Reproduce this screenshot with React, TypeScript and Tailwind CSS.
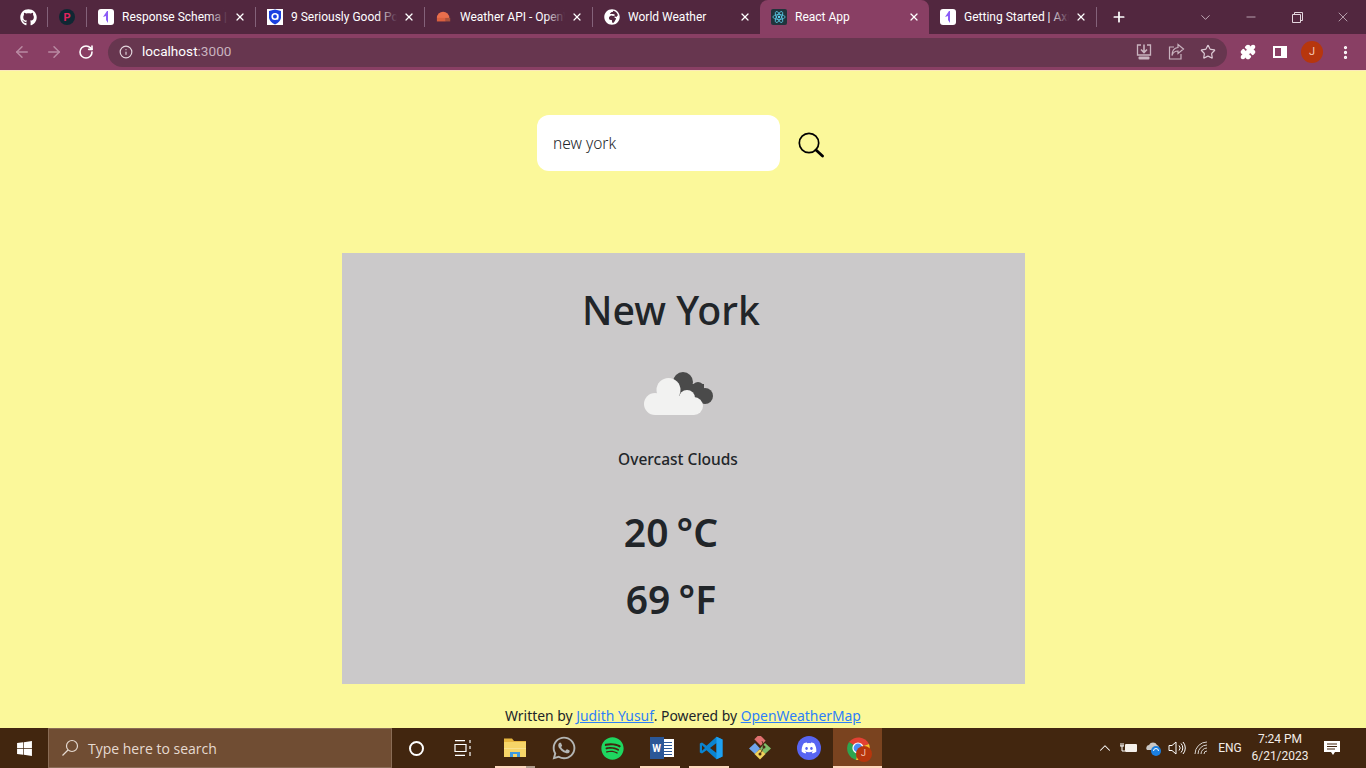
import React from "react";
import { ArrowLeft, ArrowRight, RotateCw, Info, Star, Plus, X, Minus, ChevronDown, ChevronUp, Puzzle, EllipsisVertical } from "lucide-react";
import { FaGithub, FaWhatsapp, FaSpotify, FaDiscord, FaWindows } from "react-icons/fa";
import { FaGlobeAfrica } from "react-icons/fa";

const P1 = () => (
  <div className="w-4 h-4 rounded-[3px] bg-white flex items-center justify-center">
    <svg width="8" height="12" viewBox="0 0 8 12"><path d="M5 0 L6 0 L6 12 L4 9 L4 5 L1 6 Z" fill="#8b5cf6" /></svg>
  </div>
);
const Auth0 = () => (
  <div className="w-4 h-4 bg-white flex items-center justify-center">
    <svg width="14" height="16" viewBox="0 0 14 16"><path d="M1 2 L7 0.5 L13 2 L13 9 Q12 13 7 15.5 Q2 13 1 9 Z" fill="#1a40e0" /><circle cx="7" cy="7.5" r="2.8" fill="none" stroke="#fff" strokeWidth="1.6" /><path d="M9.6 5 V10.5" stroke="#fff" strokeWidth="1.4" /></svg>
  </div>
);
const Helmet = () => (
  <svg width="18" height="16" viewBox="0 0 18 16"><path d="M1 9 a7 7 0 0 1 14 0 Z" fill="#e96e4c" /><rect x="1" y="9" width="10" height="4" fill="#d9603f" /><rect x="11" y="9" width="5" height="4" fill="#a9533c" /></svg>
);
const ReactFav = () => (
  <div className="w-4 h-4 rounded-[2px] bg-[#20343c] flex items-center justify-center">
    <svg width="14" height="14" viewBox="-12 -12 24 24" fill="none" stroke="#61dafb" strokeWidth="1.2"><circle r="2" fill="#61dafb" stroke="none" /><ellipse rx="10.5" ry="4.2" /><ellipse rx="10.5" ry="4.2" transform="rotate(60)" /><ellipse rx="10.5" ry="4.2" transform="rotate(120)" /></svg>
  </div>
);
const Sep = () => <div className="w-px h-[20px] bg-[#84627a] shrink-0" />;

function Tab({ icon, title, active, sep = true, w = "w-[168px]" }: { icon: React.ReactNode; title: string; active?: boolean; sep?: boolean; w?: string }) {
  const fade = active ? "from-[#893f64]/0 to-[#893f64]" : "from-[#52273f]/0 to-[#52273f]";
  return (
    <>
      <div className={`${w} shrink-0 h-[34px] flex items-center pl-[11px] pr-[8px] relative ${active ? "bg-[#893f64] rounded-t-[8px]" : ""}`}>
        <div className="w-4 h-4 shrink-0 flex items-center justify-center">{icon}</div>
        <div className="ml-2 flex-1 overflow-hidden relative whitespace-nowrap text-[12px] text-white" style={{ fontFamily: "Roboto, sans-serif" }}>
          {title}
          <div className={`absolute right-0 top-0 bottom-0 w-[20px] bg-gradient-to-r ${fade}`} />
        </div>
        <X size={12} strokeWidth={2.4} color="#fff" className="ml-[6px] mr-[1px] shrink-0" />
      </div>
      {sep ? <Sep /> : null}
    </>
  );
}

const Word = () => (
  <div className="relative w-[24px] h-[22px]">
    <div className="absolute right-0 top-[2px] w-[14px] h-[18px] bg-white flex flex-col justify-center gap-[2px] px-[2px]">
      <div className="h-px bg-[#2b5797]" /><div className="h-px bg-[#2b5797]" /><div className="h-px bg-[#2b5797]" /><div className="h-px bg-[#2b5797]" /><div className="h-px bg-[#2b5797]" />
    </div>
    <div className="absolute left-0 top-0 w-[14px] h-[22px] bg-[#2b5797] text-white text-[10px] font-bold flex items-center justify-center">W</div>
  </div>
);
const VSCode = () => (
  <svg width="24" height="24" viewBox="0 0 24 24"><path d="M17.5 0.8 L23.5 3.4 V20.6 L17.5 23.2 L7.5 14.2 L3 17.6 L0.8 16.4 V7.6 L3 6.4 L7.5 9.8 Z M17.5 7 L11 12 L17.5 17 Z M3 9.2 V14.8 L6 12 Z" fill="#0a84d0" fillRule="evenodd" /><path d="M17.5 0.8 L23.5 3.4 V20.6 L17.5 23.2 Z" fill="#1ea1f1" /></svg>
);
const Kraken = () => (
  <svg width="24" height="24" viewBox="0 0 24 24">
    <rect x="7.5" y="0.5" width="9" height="7" transform="rotate(45 12 4)" fill="#e0706f" />
    <path d="M7 7 L1 12.5 L7 18 L12 12.5 Z" fill="#6ea5ec" />
    <path d="M17 7 L23 12.5 L17 18 L12 12.5 Z" fill="#7fbf6a" />
    <path d="M12 13 L6.5 18 L12 23.5 L17.5 18 Z" fill="#f0d35c" />
    <circle cx="16" cy="11" r="1.5" fill="#4a2a18" /><circle cx="12" cy="18" r="1.5" fill="#4a2a18" />
    <path d="M14 5 L16 11 M16 11 L12 18" stroke="#4a2a18" strokeWidth="0.8" />
  </svg>
);
const Chrome = () => (
  <div className="relative w-[24px] h-[24px]">
    <svg width="24" height="24" viewBox="0 0 24 24">
      <path d="M12 12 L3 6 A12 12 0 0 1 23 8 Z" fill="#e34133" />
      <path d="M12 12 L23 8 A12 12 0 0 1 10 24 Z" fill="#fbc02d" />
      <path d="M12 12 L10 24 A12 12 0 0 1 3 6 Z" fill="#2fa44f" />
      <circle cx="12" cy="12" r="5.6" fill="#fff" /><circle cx="12" cy="12" r="4.4" fill="#4a8df6" />
    </svg>
    <div className="absolute left-[10px] top-[10px] w-[16px] h-[16px] rounded-full bg-[#b7360d] text-[#f5c6b5] text-[9px] flex items-center justify-center">J</div>
  </div>
);
const Explorer = () => (
  <svg width="24" height="20" viewBox="0 0 24 20">
    <path d="M1 0.5 H9 L11 3 H23 V19 H1 Z" fill="#e8b73f" /><rect x="1" y="4" width="22" height="15" fill="#f6d568" />
    <path d="M7 14 H17 V19 H14 V16 H10 V19 H7 Z" fill="#3f9be0" /><rect x="1" y="10" width="22" height="1" fill="#f9e28e" />
  </svg>
);

function Slot({ children, under, dim, active }: { children: React.ReactNode; under?: string; dim?: boolean; active?: boolean }) {
  return (
    <div className={`w-[49px] h-[40px] shrink-0 flex items-center justify-center relative ${active ? "bg-[#7a431f]" : ""}`}>
      {children}
      {under ? <div className={`absolute bottom-0 h-[2px] bg-[#fdd8bd] ${under}`} /> : null}
      {dim ? <div className="absolute bottom-0 left-[36px] w-[9px] h-[2px] bg-[#b09c8c]" /> : null}
    </div>
  );
}
const Cell = ({ children }: { children: React.ReactNode }) => <div className="w-[32px] flex justify-center items-center shrink-0">{children}</div>;
const Tray = ({ children }: { children: React.ReactNode }) => <div className="w-[24px] flex justify-center items-center shrink-0">{children}</div>;

export default function App() {
  const ui = { fontFamily: 'Roboto, "Open Sans", sans-serif' };
  const body = { fontFamily: '"Noto Sans", "Open Sans", sans-serif' };
  return (
    <div className="w-[1366px] h-[768px] overflow-hidden flex flex-col bg-[#fbf89a]" style={ui}>
      <div className="h-[34px] shrink-0 bg-[#52273f] flex items-center pl-[9px] relative">
        <div className="w-[38px] flex justify-center"><FaGithub size={17} color="#fff" /></div>
        <Sep />
        <div className="w-[38px] flex justify-center">
          <div className="w-4 h-4 rounded-full bg-[#102733] flex items-center justify-center text-[#e0245e] text-[11px] font-bold leading-none">P</div>
        </div>
        <Sep />
        <Tab icon={<P1 />} title="Response Schema | Axios" />
        <Tab icon={<Auth0 />} title="9 Seriously Good Posts" />
        <Tab icon={<Helmet />} title="Weather API - OpenWeather" w="w-[167px]" />
        <Tab icon={<FaGlobeAfrica size={16} color="#fff" />} title="World Weather" sep={false} w="w-[167px]" />
        <Tab icon={<ReactFav />} title="React App" active sep={false} w="w-[169px]" />
        <Tab icon={<P1 />} title="Getting Started | Axios Docs" w="w-[167px]" />
        <div className="w-[44px] flex justify-center"><Plus size={16} strokeWidth={2.6} color="#fff" /></div>
        <div className="ml-auto flex items-center text-[#e4d6de]">
          <div className="w-[46px] flex justify-center"><ChevronDown size={15} strokeWidth={1.2} /></div>
          <div className="w-[46px] flex justify-center"><Minus size={14} strokeWidth={1.2} /></div>
          <div className="w-[46px] flex justify-center">
            <svg width="11" height="11" viewBox="0 0 11 11" fill="none" stroke="currentColor"><path d="M0.5 2.5 H8.5 V10.5 H0.5 Z M2.5 2.5 V0.5 H10.5 V8.5 H8.5" /></svg>
          </div>
          <div className="w-[46px] flex justify-center"><X size={16} strokeWidth={1} /></div>
        </div>
      </div>

      <div className="h-[37px] shrink-0 bg-[#893f64] flex items-center pl-[13px] border-b border-[#fbe8bb]">
        <ArrowLeft size={18} color="#b98aa2" strokeWidth={2} className="mr-[14px]" />
        <ArrowRight size={18} color="#b98aa2" strokeWidth={2} className="mr-[15px]" />
        <RotateCw size={16} color="#fff" strokeWidth={2.4} />
        <div className="ml-[14px] w-[1119px] h-[29px] shrink-0 rounded-full bg-[#67364f] flex items-center pl-[11px] pr-[3px]">
          <Info size={14} color="#e2d5dc" />
          <div className="ml-[9px] text-[13.6px] text-white leading-none">localhost<span className="text-[#c9b3bf]">:3000</span></div>
          <div className="ml-auto flex items-center text-[#c9b3bf]">
            <Cell><svg width="18" height="18" viewBox="0 0 18 18" fill="none" stroke="currentColor" strokeWidth="1.3"><path d="M6 2 H2.5 V12 H15.5 V2 H12" /><path d="M9 1.5 V9 M6 6.5 L9 9.5 L12 6.5" strokeWidth="1.6" /><rect x="3.5" y="13.5" width="11" height="3" rx="1" fill="currentColor" stroke="none" /></svg></Cell>
            <Cell><svg width="18" height="18" viewBox="0 0 18 18" fill="none" stroke="currentColor" strokeWidth="1.2"><path d="M7 4 H2.5 V16 H14 V11" /><path d="M11 1.5 L16.5 6 L11 10.5 V8 C8 8 6 9.5 5 12.5 C5 8.5 7 5 11 4.5 Z" /></svg></Cell>
            <Cell><Star size={16} strokeWidth={1.8} color="#dccad4" /></Cell>
          </div>
        </div>
        <div className="ml-[5px] flex items-center">
          <Cell><Puzzle size={16} fill="#fff" color="#fff" /></Cell>
          <Cell><svg width="16" height="16" viewBox="0 0 16 16"><path d="M1 2 H15 V14 H1 Z M3 4 V12 H9 V4 Z" fill="#fff" fillRule="evenodd" /></svg></Cell>
          <Cell><div className="w-[22px] h-[22px] rounded-full bg-[#b7360d] text-[#f5c6b5] text-[11px] flex items-center justify-center">J</div></Cell>
          <div className="w-[34px] flex justify-center"><EllipsisVertical size={17} color="#fff" strokeWidth={2.6} /></div>
        </div>
      </div>

      <div className="flex-1 flex flex-col items-center" style={body}>
        <div className="mt-[44px] flex items-center h-[56px] w-[287px] ml-[-5px] shrink-0">
          <div className="w-[243px] shrink-0 h-[56px] rounded-[12px] bg-white flex items-center pl-[16px] pt-[2px] text-[15.5px] font-light text-[#212529]">new york</div>
          <svg width="26" height="26" viewBox="0 0 26 26" fill="none" stroke="#000" className="ml-[18px] shrink-0 mt-[3px]"><circle cx="11" cy="11" r="9.7" strokeWidth="1.7" /><path d="M18 18 L24.5 24" strokeWidth="2.8" strokeLinecap="round" /></svg>
        </div>
        <div className="mt-[82px] ml-[1px] w-[683px] h-[431px] shrink-0 bg-[#cbc9ca] flex flex-col items-center text-[#212529]">
          <h1 className="mt-[30px] mr-[25px] text-[39.3px] leading-[54px] font-medium">New York</h1>
          <svg width="70" height="44" viewBox="0 0 70 44" className="mt-[35px] mr-[9px] shrink-0">
            <g fill="#4a4a4a"><circle cx="39" cy="10" r="10" /><circle cx="54" cy="16" r="6" /><circle cx="61" cy="24" r="8" /><rect x="34" y="12" width="26" height="18" /></g>
            <g fill="#f2f2f1"><circle cx="24.5" cy="18" r="12" /><circle cx="43" cy="26" r="8" /><circle cx="50" cy="34" r="9" /><circle cx="11" cy="32" r="11" /><rect x="11" y="24" width="39" height="19" /></g>
          </svg>
          <div className="mt-[32px] mr-[11px] text-[15.5px] leading-[22px] font-medium">Overcast Clouds</div>
          <div className="mt-[32px] mr-[25px] text-[39px] leading-[60px] font-semibold [word-spacing:-2px]">20 °C</div>
          <div className="mt-[7px] mr-[25px] text-[39px] leading-[60px] font-semibold [word-spacing:-2px]">69 °F</div>
        </div>
        <div className="mt-[22px] text-[13.9px] leading-[20px] text-[#212529]">
          Written by <a className="text-[#2d7ff9] underline">Judith Yusuf</a>. Powered by <a className="text-[#2d7ff9] underline">OpenWeatherMap</a>
        </div>
      </div>

      <div className="h-[40px] shrink-0 bg-[#42260f] flex items-center text-white relative">
        <div className="w-[48px] flex justify-center"><FaWindows size={17} color="#fff" /></div>
        <div className="w-[344px] h-[40px] bg-[#704d33] border border-[#8a6c55] flex items-center pl-[12px] text-[14px] text-[#e6dad1]" style={{ fontFamily: '"Open Sans", sans-serif' }}>
          <svg width="18" height="18" viewBox="0 0 18 18" fill="none" stroke="#e6dad1" strokeWidth="1.2"><circle cx="11" cy="7" r="5.5" /><path d="M7 11 L1.5 16.5" /></svg>
          <span className="ml-[9px]">Type here to search</span>
        </div>
        <div className="w-[48px] flex justify-center"><div className="w-[15px] h-[15px] rounded-full border-2 border-white" /></div>
        <div className="w-[46px] mr-[4px] flex justify-center">
          <svg width="18" height="16" viewBox="0 0 18 16" fill="none" stroke="#fff" strokeWidth="1.2"><path d="M1 0.6 H11 M1 15.4 H11 M1 4.5 H12 V11.5 H1 Z M16 0 V3 M16 6 V9 M16 12 V16" /></svg>
        </div>
        <Slot under="left-[5px] w-[31px]" dim><Explorer /></Slot>
        <Slot><FaWhatsapp size={26} color="#b4b6b4" /></Slot>
        <Slot><FaSpotify size={23} color="#1ed760" /></Slot>
        <Slot under="left-[3px] w-[40px]"><Word /></Slot>
        <Slot under="left-[3px] w-[40px]"><VSCode /></Slot>
        <Slot><Kraken /></Slot>
        <Slot><div className="w-[24px] h-[24px] rounded-full bg-[#5865f2] flex items-center justify-center"><FaDiscord size={16} color="#fff" /></div></Slot>
        <Slot under="left-0 w-full" active><Chrome /></Slot>

        <div className="ml-auto flex items-center h-full pr-[16px]">
          <Tray><ChevronUp size={18} strokeWidth={1.4} color="#fff" /></Tray>
          <Tray><svg width="18" height="12" viewBox="0 0 18 12"><rect x="5" y="2" width="12" height="8" rx="1" fill="#f5f0ea" /><path d="M0 4 H4 M1 1 V4 M3 1 V4 M2 4 V9 H5" stroke="#fff" fill="none" /></svg></Tray>
          <Tray><svg width="18" height="16" viewBox="0 0 18 16"><path d="M3 10 a3 3 0 0 1 2 -5 a4.5 4.5 0 0 1 8 0 a3 3 0 0 1 1 5 Z" fill="#c9c7c5" /><circle cx="12" cy="11" r="5" fill="#1b7fe0" /><path d="M9.5 11 a2.5 2.5 0 0 1 5 0" stroke="#fff" fill="none" /></svg></Tray>
          <Tray><svg width="18" height="14" viewBox="0 0 18 14" fill="none" stroke="#fff" strokeWidth="1"><path d="M1 4.5 H4 L8 1 V13 L4 9.5 H1 Z M11 4.5 a3.5 3.5 0 0 1 0 5 M13 2.5 a6.5 6.5 0 0 1 0 9 M15 1 a9 9 0 0 1 0 12" /></svg></Tray>
          <div className="w-[25px] flex justify-center shrink-0"><svg width="15" height="14" viewBox="0 0 15 14" fill="none" stroke="#d9d4cf" strokeWidth="1"><path d="M1 13 a12 12 0 0 1 12 -12 M4 13 a9 9 0 0 1 9 -9 M7 13 a6 6 0 0 1 6 -6 M10 13 a3 3 0 0 1 3 -3" /></svg></div>
          <div className="w-[32px] text-center text-[12px] text-[#f2ece7] shrink-0">ENG</div>
          <div className="w-[68px] text-center text-[12px] leading-[17px] text-[#f2ece7] shrink-0"><div>7:24 PM</div><div>6/21/2023</div></div>
          <div className="w-[36px] flex justify-center shrink-0"><svg width="18" height="16" viewBox="0 0 18 16"><path d="M1 1 H17 V12 H12 L10 15 L8 12 H1 Z" fill="#fff" /><path d="M4 4 H14 M4 6.5 H14 M4 9 H12" stroke="#43250f" /></svg></div>
        </div>
      </div>
    </div>
  );
}
